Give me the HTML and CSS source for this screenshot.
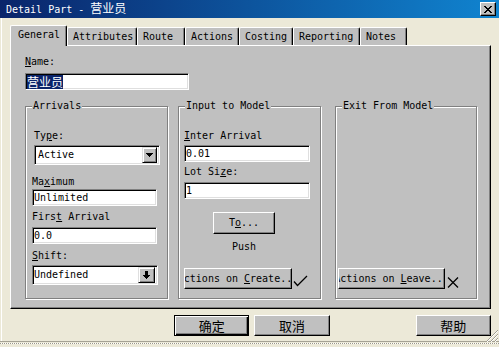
FILE: index.html
```html
<!DOCTYPE html>
<html lang="zh-CN">
<head>
<meta charset="utf-8">
<title>Detail Part - 营业员</title>
<link rel="stylesheet" href="styles.css">
</head>
<body>
<div class="window">
  <div class="titlebar">
    <span class="title">Detail Part - <span class="cjk">营业员</span></span>
    <button class="close" type="button" aria-label="Close">
      <svg width="8" height="7" viewBox="0 0 8 7"><path d="M0 0h2v1H0zM6 0h2v1H6zM1 1h2v1H1zM5 1h2v1H5zM2 2h4v1H2zM3 3h2v1H3zM2 4h4v1H2zM1 5h2v1H1zM5 5h2v1H5zM0 6h2v1H0zM6 6h2v1H6z" fill="#000"/></svg>
    </button>
  </div>

  <div class="client">
    <div class="tabs">
      <div class="tab active t1">General</div>
      <div class="tab t2">Attributes</div>
      <div class="tab t3">Route</div>
      <div class="tab t4">Actions</div>
      <div class="tab t5">Costing</div>
      <div class="tab t6">Reporting</div>
      <div class="tab t7">Notes</div>
    </div>

    <div class="panel">
      <div class="lbl"><u>N</u>ame:</div>
      <div class="field name-field"><span class="sel cjk">营业员</span></div>

      <div class="groups">
        <div class="group g-arrivals">
          <span class="legend">Arrivals</span>
          <div class="lbl lbl-type">Ty<u>p</u>e:</div>
          <div class="combo combo-type">
            <span>Active</span>
            <span class="drop"><svg width="7" height="4" viewBox="0 0 7 4"><path d="M0 0h7v1H0zM1 1h5v1H1zM2 2h3v1H2zM3 3h1v1H3z" fill="#000"/></svg></span>
          </div>
          <div class="lbl lbl-max">Ma<u>x</u>imum</div>
          <div class="field fld-arr fld-max">Unlimited</div>
          <div class="lbl lbl-first">Firs<u>t</u> Arrival</div>
          <div class="field fld-arr fld-first">0.0</div>
          <div class="lbl lbl-shift"><u>S</u>hift:</div>
          <div class="combo combo-shift">
            <span>Undefined</span>
            <span class="drop drop-wide"><svg width="7" height="8" viewBox="0 0 7 8"><path d="M2 0h3v4H2zM0 4h7v1H0zM1 5h5v1H1zM2 6h3v1H2zM3 7h1v1H3z" fill="#000"/></svg></span>
          </div>
        </div>

        <div class="group g-input">
          <span class="legend">Input to Model</span>
          <div class="lbl"><u>I</u>nter Arrival</div>
          <div class="field fld-in fld-inter">0.01</div>
          <div class="lbl lbl-lot">Lot Si<u>z</u>e:</div>
          <div class="field fld-in fld-lot">1</div>
          <button class="btn btn-to" type="button"><span>T<u>o</u>...</span></button>
          <div class="push">Push</div>
          <div class="act-row">
            <button class="btn btn-act btn-create" type="button"><span>Actions on <u>C</u>reate...</span></button>
            <svg class="check" width="15" height="12" viewBox="0 0 15 12"><polyline points="1,6.5 4.5,10.5 14,1" fill="none" stroke="#000" stroke-width="1.3"/></svg>
          </div>
        </div>

        <div class="group g-exit">
          <span class="legend">Exit From Model</span>
          <div class="act-row">
            <button class="btn btn-act btn-leave" type="button"><span>Actions on <u>L</u>eave...</span></button>
            <svg class="xmark" width="12" height="11" viewBox="0 0 12 11"><path d="M1 0.5L11 10.5M11 0.5L1 10.5" fill="none" stroke="#000" stroke-width="1.3"/></svg>
          </div>
        </div>
      </div>
    </div>

    <div class="dlg-buttons">
      <button class="btn dbtn default cjk" type="button">确定</button>
      <button class="btn dbtn cancel cjk" type="button">取消</button>
      <button class="btn dbtn help cjk" type="button">帮助</button>
    </div>
  </div>

  <div class="statusline"></div>
  <svg class="grip" width="12" height="12" viewBox="0 0 12 12"><path d="M12 0L0 12M12 4L4 12M12 8L8 12" stroke="#a09d90" stroke-width="1"/><path d="M12 1L1 12M12 5L5 12M12 9L9 12" stroke="#fff" stroke-width="1"/></svg>
</div>
</body>
</html>
```

FILE: styles.css
```css
* { box-sizing: border-box; }
html, body { margin: 0; padding: 0; }
body {
  width: 499px;
  height: 347px;
  overflow: hidden;
  background: #ece9d8;
  font-family: "DejaVu Sans Mono", "Liberation Mono", "Noto Sans CJK SC", monospace;
  font-size: 10px;
  line-height: 12px;
  color: #000;
}
u { text-decoration: underline; text-underline-offset: 1px; }
.cjk { font-family: "Noto Sans CJK SC", "Noto Sans", sans-serif; font-size: 12px; }

.window {
  position: relative;
  height: 347px;
  display: flex;
  flex-direction: column;
  box-shadow: inset 1px 0 0 #ece9d8, inset 2px 0 0 #fff;
}

/* title bar */
.titlebar {
  flex: none;
  height: 18px;
  display: flex;
  align-items: center;
  justify-content: space-between;
  padding: 0 3px 0 6px;
  background: linear-gradient(90deg, #0a246a 0%, #1084d0 100%);
  color: #fff;
}
.title { white-space: nowrap; line-height: 14px; }
.title .cjk { line-height: 14px; }
.close {
  width: 16px;
  height: 14px;
  margin: 0;
  padding: 0;
  display: flex;
  align-items: center;
  justify-content: center;
  background: #c0c0c0;
  border: 1px solid;
  border-color: #fff #000 #000 #fff;
  box-shadow: inset -1px -1px 0 #808080;
}

/* tabs */
.client { flex: none; padding: 7px 8px 0 10px; }
.tabs { display: flex; align-items: flex-end; height: 20px; }
.tab {
  flex: none;
  height: 18px;
  padding: 3px 0 0 5px;
  background: #c0c0c0;
  border-top: 1px solid #fff;
  border-left: 1px solid #fff;
  border-right: 1px solid #000;
  box-shadow: inset -1px 0 0 #808080;
  border-radius: 2px 2px 0 0;
  white-space: nowrap;
}
.tab.active {
  height: 21px;
  margin-bottom: -1px;
  padding-left: 7px;
  position: relative;
  z-index: 1;
}
.t1 { width: 57px; }
.t2 { width: 70px; }
.t3 { width: 48px; }
.t4 { width: 54px; }
.t5 { width: 54px; }
.t6 { width: 67px; }
.t7 { width: 47px; }

.panel {
  height: 264px;
  background: #c0c0c0;
  border: 1px solid;
  border-color: #fff #000 #000 #fff;
  box-shadow: inset -1px -1px 0 #808080;
  padding: 10px 14px 0;
}

/* labels & fields */
.lbl { height: 12px; white-space: nowrap; }
.field {
  height: 17px;
  background: #fff;
  border: 1px solid;
  border-color: #808080 #fff #fff #808080;
  box-shadow: inset 1px 1px 0 #000, inset -1px -1px 0 #dfdfdf;
  padding: 0 0 0 1px;
  line-height: 15px;
  white-space: nowrap;
  overflow: hidden;
}
.name-field { width: 164px; margin-top: 5px; display: flex; align-items: flex-end; }
.sel { background: #0a246a; color: #fff; height: 14px; line-height: 14px; }

/* group boxes */
.groups { display: flex; margin-top: 16px; }
.group {
  position: relative;
  flex: none;
  height: 193px;
  border: 1px solid #808080;
  box-shadow: inset 1px 1px 0 #fff, 1px 1px 0 #fff;
  display: flex;
  flex-direction: column;
  align-items: flex-start;
  padding: 23px 0 9px;
}
.legend {
  position: absolute;
  top: -7px;
  left: 6px;
  padding: 0 1px;
  background: #c0c0c0;
  line-height: 12px;
  white-space: nowrap;
}
.g-arrivals { width: 143px; padding-left: 6px; }
.g-input { width: 143px; margin-left: 10px; padding-left: 5px; }
.g-exit { width: 142px; margin-left: 14px; padding-left: 2px; }

/* combo boxes */
.combo {
  width: 126px;
  height: 20px;
  margin-top: 3px;
  display: flex;
  align-items: center;
  justify-content: space-between;
  background: #fff;
  border: 1px solid;
  border-color: #808080 #fff #fff #808080;
  box-shadow: inset 1px 1px 0 #000, inset -1px -1px 0 #dfdfdf;
  padding: 1px 2px 1px 3px;
  white-space: nowrap;
}
.drop {
  flex: none;
  width: 15px;
  height: 16px;
  display: flex;
  align-items: center;
  justify-content: center;
  background: #c0c0c0;
  border: 1px solid;
  border-color: #dfdfdf #000 #000 #dfdfdf;
  box-shadow: inset 1px 1px 0 #fff, inset -1px -1px 0 #808080;
}
.drop-wide { width: 17px; }
.lbl-type, .combo-type { margin-left: 2px; }
.combo-shift { padding-left: 1px; }

.lbl-max { margin-top: 11px; }
.fld-arr { width: 125px; }
.fld-max { margin-top: 1px; }
.lbl-first { margin-top: 5px; }
.fld-first { margin-top: 4px; }
.lbl-shift { margin-top: 6px; }

.fld-in { width: 126px; }
.fld-inter { margin-top: 3px; }
.lbl-lot { margin-top: 4px; }
.fld-lot { margin-top: 4px; }

/* buttons */
.btn {
  font: inherit;
  color: #000;
  margin: 0;
  padding: 0;
  background: #c0c0c0;
  border: 1px solid;
  border-color: #fff #000 #000 #fff;
  box-shadow: inset -1px -1px 0 #808080;
  display: flex;
  align-items: center;
  justify-content: center;
  overflow: hidden;
  white-space: nowrap;
  line-height: 12px;
}
.btn span { flex: none; }
.btn-to { width: 62px; height: 22px; margin: 13px 0 0 29px; }
.push { margin: 7px 0 0 48px; }

.act-row { margin-top: auto; display: flex; align-items: flex-end; }
.btn-act { height: 21px; }
.btn-create { width: 108px; }
.btn-leave { width: 107px; }
.check { margin: 0 0 2px 1px; }
.xmark { margin: 0 0 1px 2px; }

.dlg-buttons { display: flex; margin-top: 6px; padding-left: 164px; }
.dbtn { width: 76px; height: 21px; font-family: "Noto Sans CJK SC", sans-serif; font-size: 13px; line-height: 15px; }
.dbtn.default {
  border-color: #000;
  box-shadow: inset 1px 1px 0 #fff, inset -1px -1px 0 #000, inset -2px -2px 0 #808080;
}
.cancel { margin-left: 5px; }
.help { margin-left: 86px; }

.statusline {
  margin-top: auto;
  height: 6px;
  border-top: 1px solid #a5a294;
  background-color: #ece9d8;
  background-image: repeating-linear-gradient(90deg, #9a978a 0 1px, #fff 1px 2px);
  background-size: 100% 1px;
  background-position: 0 1px;
  background-repeat: no-repeat;
}
.grip { position: absolute; right: 1px; bottom: 5px; }
```
